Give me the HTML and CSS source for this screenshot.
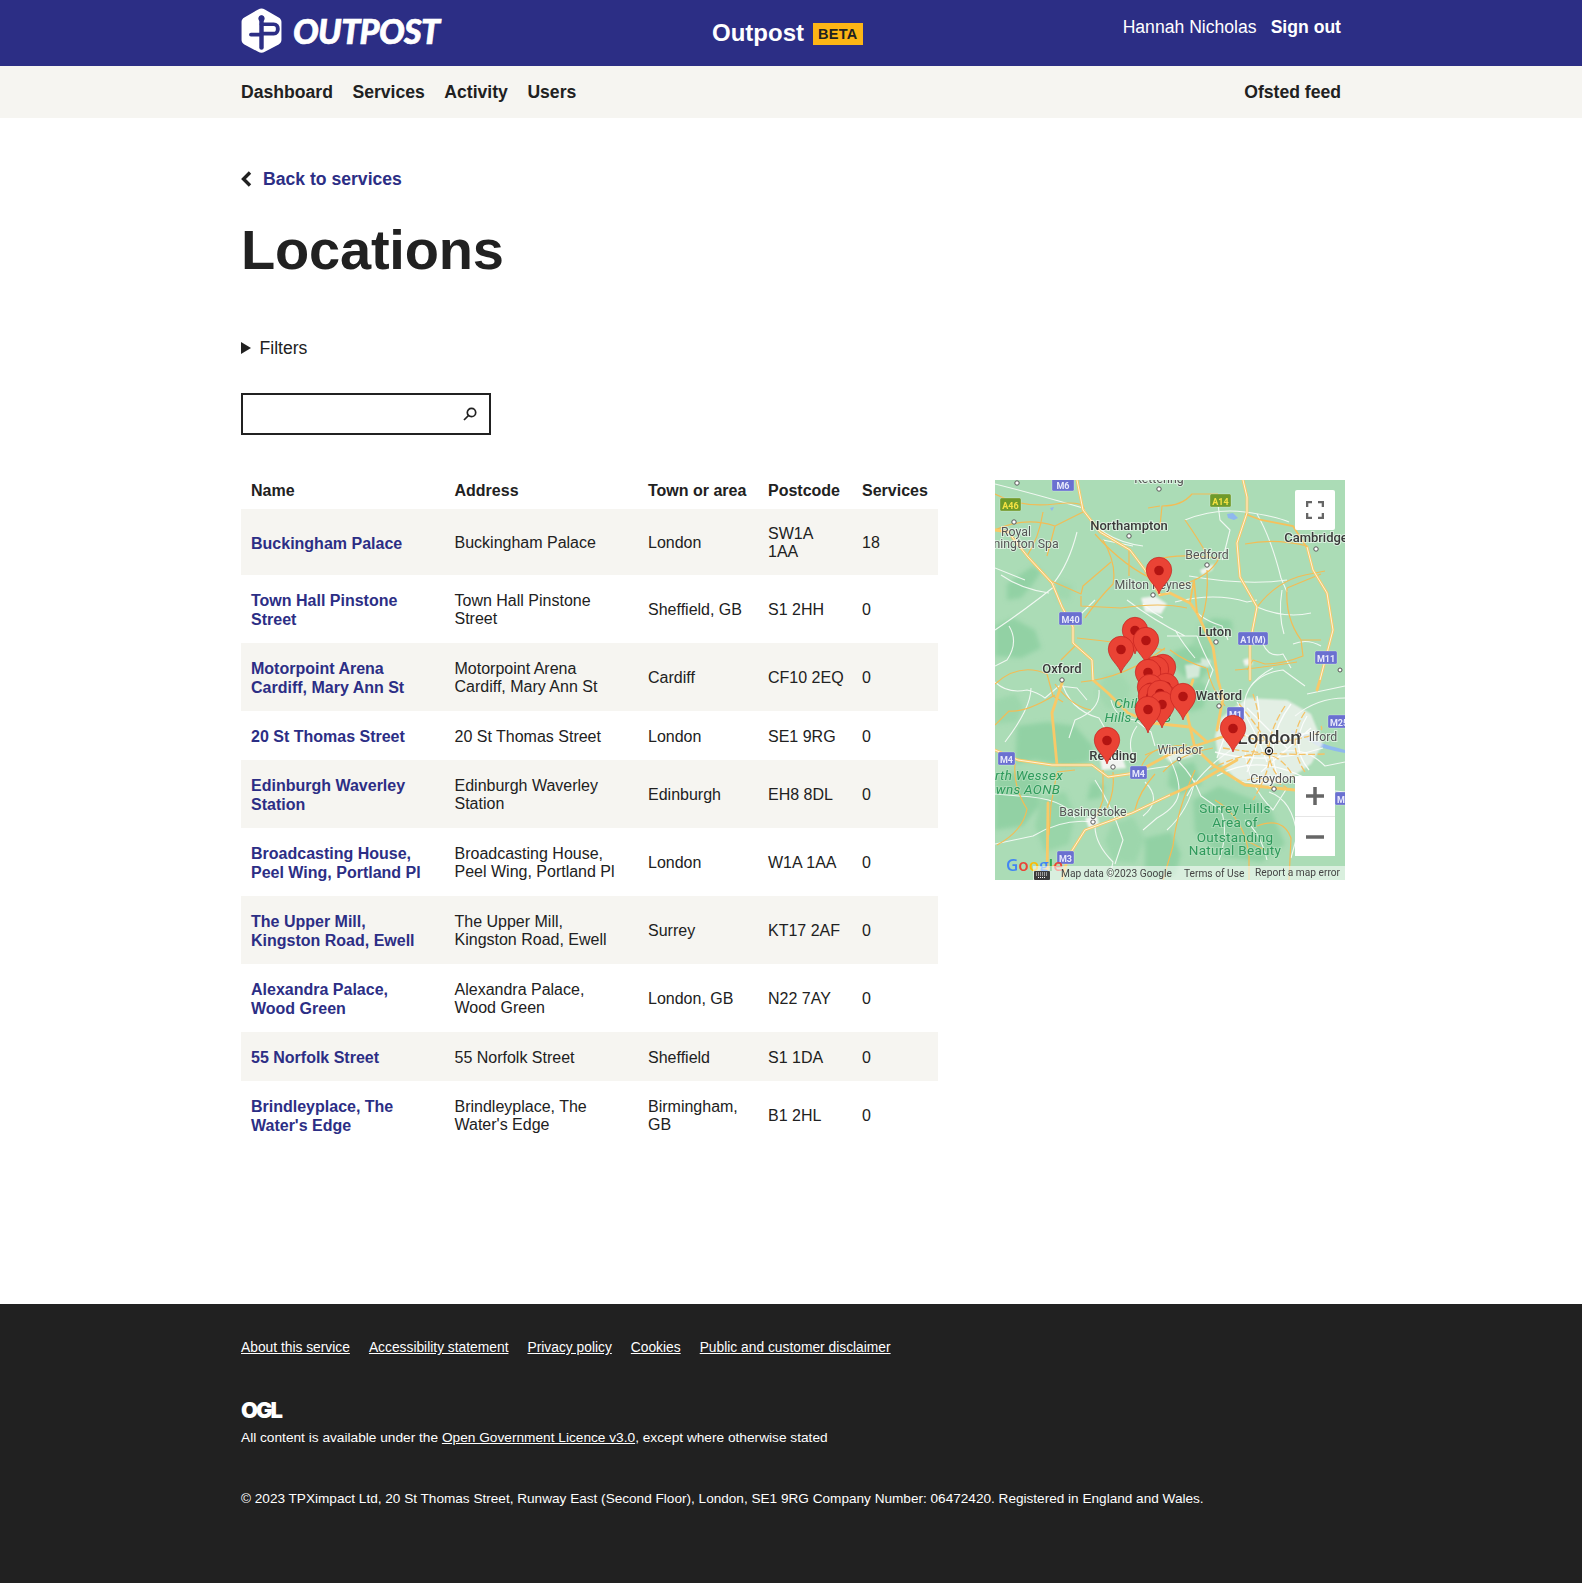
FILE: index.html
```html
<!DOCTYPE html>
<html lang="en">
<head>
	<meta charset="UTF-8" />
	<title>Locations | Outpost</title>
	<link rel="stylesheet" href="styles.css">
</head>
<body>
	<header class="masthead">
		<div class="container masthead-row">
			<a class="logo" href="#">
				<svg class="logo-mark" viewBox="0 0 37 43" width="41" height="45" preserveAspectRatio="none">
					<path d="M18.5 0.5c1 0 2 .3 3 .9l12.5 7.6c1.6 1 2.5 2.4 2.5 4.2v17.4c0 1.8-.9 3.2-2.5 4.2l-12.5 7.1c-2 1.1-4 1.1-6 0L3 34.800c-1.600-1-2.500-2.400-2.500-4.200V13.200c0-1.800.9-3.200 2.500-4.200l12.500-7.600c1-.6 2-.9 3-.9z" fill="#fff"/>
					<path d="M18.500 9v29" stroke="#2c2e85" stroke-width="4" stroke-linecap="round" fill="none"/>
					<circle cx="18.500" cy="10" r="2.800" fill="#2c2e85"/>
					<path d="M9 25.500h9.500M18.500 15.500h11c5 0 5 9 0 9h-11" stroke="#2c2e85" stroke-width="3.500" stroke-linecap="round" stroke-linejoin="round" fill="none"/>
				</svg>
				<span class="logo-word">OUTPOST</span>
			</a>
			<div class="service-name">Outpost<span class="beta">BETA</span></div>
			<div class="user-links">
				<a href="#">Hannah Nicholas</a>
				<a class="strong" href="#">Sign out</a>
			</div>
		</div>
	</header>

	<nav class="subnav">
		<div class="container subnav-row">
			<ul>
				<li><a href="#">Dashboard</a></li>
				<li><a href="#">Services</a></li>
				<li><a href="#">Activity</a></li>
				<li><a href="#">Users</a></li>
			</ul>
			<a href="#">Ofsted feed</a>
		</div>
	</nav>

	<main class="container page">
		<a class="back-link" href="#">
			<svg viewBox="0 0 11 16" width="11" height="16"><path d="M9 1.500L2.500 8 9 14.500" fill="none" stroke="#212121" stroke-width="3.400"/></svg>
			Back to services
		</a>
		<h1>Locations</h1>

		<div class="filters"><span class="arrow"></span>Filters</div>

		<div class="search">
			<input type="text" aria-label="Search">
			<svg viewBox="0 0 14 14" width="14" height="14"><circle cx="8.500" cy="5.500" r="4.200" fill="none" stroke="#212121" stroke-width="1.700"/><path d="M5.500 8.500L1 13" stroke="#212121" stroke-width="1.700"/></svg>
		</div>

		<div class="locations">
			<table>
				<thead>
					<tr>
						<th class="col-name">Name</th>
						<th class="col-address">Address</th>
						<th class="col-town">Town or area</th>
						<th class="col-postcode">Postcode</th>
						<th>Services</th>
					</tr>
				</thead>
				<tbody>
					<tr><td class="name"><a href="#">Buckingham Palace</a></td><td>Buckingham Palace</td><td>London</td><td class="postcode">SW1A 1AA</td><td>18</td></tr>
					<tr><td class="name"><a href="#">Town Hall Pinstone Street</a></td><td>Town Hall Pinstone Street</td><td>Sheffield, GB</td><td class="postcode">S1 2HH</td><td>0</td></tr>
					<tr><td class="name"><a href="#">Motorpoint Arena Cardiff, Mary Ann St</a></td><td>Motorpoint Arena Cardiff, Mary Ann St</td><td>Cardiff</td><td class="postcode">CF10 2EQ</td><td>0</td></tr>
					<tr><td class="name"><a href="#">20 St Thomas Street</a></td><td>20 St Thomas Street</td><td>London</td><td class="postcode">SE1 9RG</td><td>0</td></tr>
					<tr><td class="name"><a href="#">Edinburgh Waverley Station</a></td><td>Edinburgh Waverley Station</td><td>Edinburgh</td><td class="postcode">EH8 8DL</td><td>0</td></tr>
					<tr><td class="name"><a href="#">Broadcasting House, Peel Wing, Portland Pl</a></td><td>Broadcasting House, Peel Wing, Portland Pl</td><td>London</td><td class="postcode">W1A 1AA</td><td>0</td></tr>
					<tr><td class="name"><a href="#">The Upper Mill, Kingston Road, Ewell</a></td><td>The Upper Mill, Kingston Road, Ewell</td><td>Surrey</td><td class="postcode">KT17 2AF</td><td>0</td></tr>
					<tr><td class="name"><a href="#">Alexandra Palace, Wood Green</a></td><td>Alexandra Palace, Wood Green</td><td>London, GB</td><td class="postcode">N22 7AY</td><td>0</td></tr>
					<tr><td class="name"><a href="#">55 Norfolk Street</a></td><td>55 Norfolk Street</td><td>Sheffield</td><td class="postcode">S1 1DA</td><td>0</td></tr>
					<tr><td class="name"><a href="#">Brindleyplace, The Water's Edge</a></td><td>Brindleyplace, The Water's Edge</td><td>Birmingham, GB</td><td class="postcode">B1 2HL</td><td>0</td></tr>
				</tbody>
			</table>

			<div class="map">
				<svg class="map-canvas" viewBox="0 0 350 400" width="350" height="400">
					<defs>
						<g id="pin">
							<path d="M0 23C-2 15-12.700 9-12.700-1A12.700 12.700 0 1 1 12.700-1C12.700 9 2 15 0 23Z" fill="#ea4335" stroke="#c5221f" stroke-width=".7"/>
							<circle r="4.800" cy="-.5" fill="#b31412"/>
						</g>
						<filter id="soft" x="-5%" y="-5%" width="110%" height="110%"><feGaussianBlur stdDeviation="2"/></filter>
						<filter id="softer" x="-5%" y="-5%" width="110%" height="110%"><feGaussianBlur stdDeviation="1"/></filter>
					</defs>
					<rect width="350" height="400" fill="#abdcb6"/>

					<!-- forest and downs -->
					<g fill="#92d1a4" filter="url(#soft)">
						<path d="M12 104l14-10 12-8 8 6-8 12-12 14-14 2z"/>
						<path d="M0 146l18-8 22 12 6 18-20 10-26-2z"/>
						<path d="M204 146l14-8 18 2 2 10-20 6-12-2z"/>
						<path d="M178 172l16-6 18 4 4 18-10 12-18-4-12-12z"/>
						<path d="M190 206l14-6 10 8-6 20-14 4-8-14z"/>
						<path d="M205 150l16 8-4 24-14 2-10-14z" opacity=".6"/>
						<path d="M22 246l30-4 28 4 18 20-4 16-24 4-30-6-20 4z"/>
						<path d="M0 296l24-4 22 8-2 26-16 20-28 4z"/>
						<path d="M46 318l24-6 10 22-6 30-24 8-10-26z" opacity=".7"/>
						<path d="M96 302l14 4-4 12-14 2z"/>
						<path d="M150 358l26-6 10 22-6 22-30 2z"/>
						<path d="M116 345l22-8 12 22-10 24-22-2-8-20z" opacity=".55"/>
						<path d="M198 320l26-14 50 20 16 38-24 18-40-6-26-24z"/>
						<path d="M175 288l24-6 8 22-20 10-14-8z"/>
						<path d="M0 220l20-6 8 12-6 16-22 2z" opacity=".55"/>
						<path d="M60 100l18 6-4 14-12-2z" opacity=".4"/>
						<path d="M110 195l16-2 10 14-4 20-20 2-10-16z" opacity=".35"/>
					</g>
					<!-- water -->
					<g fill="#8fb8ee">
						<path d="M232 34l6-1 5 5-4 2-6-2z"/>
						<path d="M55 28l4-1-2 4z"/>
						<path d="M296 250c10 2 18 6 24 10 6 4 16 6 30 10l0 3c-14-3-26-5-32-10-6-4-14-8-22-10z"/>
					</g>
					<!-- built up -->
					<g fill="#f1f4f0" filter="url(#softer)">
						<path d="M226 238l26-20 40 2 24 14 12 30-12 20-20 14-24 8-30-6-18-18-4-26z" opacity=".8"/>
						<path d="M146 118l14-2 12 8-6 10-16-2z"/>
						<path d="M105 279l22-3 4 12-24 2z"/>
						<path d="M205 90l14-6-2 6-10 5z"/>
						<path d="M165 272l24-4 10 8-24 6z" opacity=".8"/>
						<path d="M148 166l8-2-2 10zM248 180l6-2 4 6-8 2z"/>
						<path d="M90 338l12-2 2 8-10 4z"/>
						<path d="M190 185l16-2-2 14-12 2zM206 178l10 2-2 8-8-2z" opacity=".7"/>
					</g>

					<!-- minor roads -->
					<g fill="none" stroke="#f8fbf8" stroke-width="1.100" stroke-linejoin="round" opacity=".9">
						<path d="M0 4Q40 14 88 28M88 28q16 32 60 38M6 95q20 14 48 18M60 106Q30 130 0 150"/>
						<path d="M82 52Q74 84 58 104M100 120l-24 24M0 88l30 12M14 146q10 16-2 34l-12 6"/>
						<path d="M148 124l10 8 10 6M108 60l30 6"/>
						<path d="M190 40q30-12 60-8t44 10M223 24l2 16 10 10-6 24-2 6M262 34q14 24 24 64l6 14M292 100q-40 6-98-4"/>
						<path d="M180 122q40-10 72 0l10-2M195 122q6 16 32 24l6 14M262 127q28 12 54 6M287 110q-4 24 2 44M268 164q6 14 20 10l8 14"/>
						<path d="M172 156h30q6 16 16 34l-8 20M180 150q8 14 20 28M132 120q26 20 58 36"/>
						<path d="M256 206q12-14 32-16l22 16M298 164q14-6 28 2"/>
						<path d="M0 202q12 12 32 8 10 2 18 8l14-12 18 2 10 12M36 208q0 20-26 54M66 200q8 30 38 38l8 14M104 210q2 20-24 30l-6 18"/>
						<path d="M116 220q4 18 24 20l16 12 4 14M142 246q-12 16-2 36M170 270q14 24 14 40t-22 28l-14 12M100 300q16 24 28 60l-8 24"/>
						<path d="M80 338q-10-20-56-22l-24-2M100 346q0 18 18 36l-4 18M98 342q-30-4-60 14l-38 8M174 286l-26 4M150 302q18 18-2 34"/>
						<path d="M184 282q14 14 22 34l20 14q8 22-2 50M200 300q-6 30-28 50M250 340q16 14 22 40M274 312q24 8 28 44l-6 22M290 296q28 14 60 16"/>
						<path d="M236 270q-32 22-44 46M250 270q2 34 28 60l14-22M286 272q24-6 44 14l20-4M300 236q22-18 50-18M312 214l38-8M250 236q-6-30 28-48"/>
					</g>
					<!-- A roads -->
					<g fill="none" stroke="#f3bc55" stroke-width="1.200" stroke-linejoin="round">
						<path d="M0 14Q26 28 60 24T88 32M0 50Q30 36 60 46L88 32M48 32q-4 26-16 44M60 46l-8 30M108 60q14 24 10 44-14 14-28 34"/>
						<path d="M116 82l-28 24-2 8-18-8-14-6M86 116v10l40 2q40-6 66 0M134 70v26M100 54q30 34 64 48"/>
						<path d="M82 158q40 4 88 12M80 166l-14 14M170 168q-40 30-84 34M60 204q16 22 36 26M150 92q4-18 50-16l24 2"/>
						<path d="M224 78q-8 18-40 28M212 90q2 30-6 52M223 14h-26q-10 12-30 12l-2 20M165 26l-12 2M190 40q14 20 24 38M250 64q30-6 62 2"/>
						<path d="M262 127q20-26 48-32l20-4M292 108q-2 30 14 52l2 16q-20 8-38 8l-12-4-6 10M306 160h20M292 108l34-14"/>
						<path d="M240 190q24-2 62-8M175 170q16 12 36 18M212 188q4 20 18 38"/>
						<path d="M0 204q24-22 52-10l6 22 10 6M60 215q-30 18-46 16L0 245M62 292l-6 33-2 30M68 200l-10 30M108 290v30l-6 16M62 292l18-2"/>
						<path d="M20 283q-2 24 12 46-4 22-30 36M118 292q2 20-6 36M74 378q-14 8-32 14M140 330q4-18 20-36M150 275q20-10 42-10"/>
						<path d="M170 268q-20 2-26 26M200 290q-18 40-22 76l-10 34M220 320q30 18 34 56v24M262 346q26-10 34 12l-2 42M322 320q-20 8-20 40M218 268q-34 6-50 24"/>
						<path d="M250 360l20 10"/>
					</g>
					<!-- London network -->
					<g fill="none" stroke="#fff" stroke-width="1.300" opacity=".85">
						<path d="M228 246l40 16 50-10M242 222q18 26 30 60M296 224q-30 40-10 80M220 272q50 14 108-4M222 296q40-24 92 4M262 216q8 40-10 76M312 236q-18 30 2 54M240 300q20 6 50 0M236 238l-14 40M252 228l40 40M316 248l-50 44"/>
					</g>
					<g fill="none" stroke="#f5c266" stroke-width="1.300" stroke-dasharray="7 2.500">
						<path d="M236 248q24 18 60 12t30-14M244 224q26 30 30 46t-16 50M290 226q-30 46-4 74M228 268q50 8 102 6M214 290q30-16 52-16t34 26M258 214q14 40-6 70M310 232q-20 30 0 60M252 300q20-6 40 8"/>
					</g>
					<!-- motorways -->
					<g fill="none" stroke="#f8c968" stroke-width="2.800" stroke-linecap="round" stroke-linejoin="round">
						<path d="M82 0L88 30 105 52 135 70 150 90 165 115 175 113 195 123 202 133 218 167 223 200 228 218 222 250"/>
						<path d="M17 57L33 77 57 103 67 127 78 147 78 163 97 180 98 200 113 213 133 233 157 243 195 247 212 262"/>
						<path d="M248 0L252 17 252 33 242 63 245 97 262 127 255 163 255 200"/>
						<path d="M312 67L318 90 332 113 338 150 325 200 322 210"/>
						<path d="M0 270L23 280 57 285 97 285 113 297 140 293 173 275 200 266 230 256"/>
						<path d="M242 280L202 303 175 315 137 333 90 350 73 377 67 400"/>
						<path d="M68 200L57 233 62 285"/>
						<path d="M53 323L52 400"/>
						<path d="M198 200L190 225 200 268 218 285 250 305 300 310"/>
						<path d="M0 50L14 52"/>
					</g>
					<path d="M195 122l4-22 3 33M250 34l16 6 32 6 14 22" fill="none" stroke="#f6c15b" stroke-width="1.800"/>
					<g fill="none" stroke="#fffef8" stroke-width=".8" stroke-linejoin="round">
						<path d="M82 0L88 30 105 52 135 70 150 90 165 115M17 57L33 77 57 103 67 127 78 147 78 163 97 180 98 200M0 270L23 280 57 285 97 285 113 297 140 293"/>
						<path d="M248 0L252 17 252 33 242 63 245 97 262 127 255 163 255 200M312 67L318 90 332 113 338 150 325 200M175 315L137 333 90 350 73 377"/>
					</g>

					<!-- town dots -->
					<g fill="#fff" stroke="#555" stroke-width="1">
						<circle cx="22" cy="3" r="2.200"/><circle cx="164" cy="9" r="2.200"/><circle cx="19" cy="42" r="2.200"/>
						<circle cx="134" cy="56" r="2.200"/><circle cx="321" cy="69" r="2.200"/><circle cx="212" cy="85" r="2.200"/>
						<circle cx="158" cy="115" r="2.200"/><circle cx="221" cy="162" r="2.200"/><circle cx="67" cy="200" r="2.200"/>
						<circle cx="224" cy="226" r="2.200"/><circle cx="184" cy="279" r="1.800"/><circle cx="118" cy="287" r="2.200"/>
						<circle cx="279" cy="309" r="2.200"/><circle cx="98" cy="342" r="2.200"/><circle cx="304" cy="255" r="1.800"/>
						<circle cx="345" cy="190" r="2"/>
					</g>
					<circle cx="274" cy="271" r="3.600" fill="#fff" stroke="#222" stroke-width="1.200"/>
					<circle cx="274" cy="271" r="1.800" fill="#222"/>

					<!-- road shields -->
					<g class="shields">
						<g class="m"><rect x="57" y="-2" width="22" height="13" rx="1.500"/><text x="68" y="8.500">M6</text></g>
						<g class="a"><rect x="5" y="18" width="21" height="13" rx="1.500"/><text x="15.500" y="28.500">A46</text></g>
						<g class="a"><rect x="215" y="14" width="21" height="13" rx="1.500"/><text x="225.500" y="24.500">A14</text></g>
						<g class="m"><rect x="64" y="132" width="23" height="13" rx="1.500"/><text x="75.500" y="142.500">M40</text></g>
						<g class="m"><rect x="243" y="152" width="30" height="13" rx="1.500"/><text x="258" y="162.500">A1(M)</text></g>
						<g class="m"><rect x="320" y="171" width="22" height="13" rx="1.500"/><text x="331" y="181.500">M11</text></g>
						<g class="m"><rect x="232" y="227" width="17" height="13" rx="1.500"/><text x="240.500" y="237.500">M1</text></g>
						<g class="m"><rect x="333" y="235" width="22" height="13" rx="1.500"/><text x="344" y="245.500">M25</text></g>
						<g class="m"><rect x="3" y="272" width="17" height="13" rx="1.500"/><text x="11.500" y="282.500">M4</text></g>
						<g class="m"><rect x="135" y="286" width="17" height="13" rx="1.500"/><text x="143.500" y="296.500">M4</text></g>
						<g class="m"><rect x="62" y="371" width="17" height="13" rx="1.500"/><text x="70.500" y="381.500">M3</text></g>
						<g class="m"><rect x="340" y="312" width="22" height="13" rx="1.500"/><text x="351" y="322.500">M25</text></g>
					</g>

					<!-- place names -->
					<g class="place">
						<text x="164" y="3">Kettering</text>
						<text x="21" y="56">Royal</text>
						<text x="31" y="68">nington Spa</text>
						<text x="212" y="79">Bedford</text>
						<text x="158" y="109">Milton Keynes</text>
						<text x="185" y="274">Windsor</text>
						<text x="328" y="261">Ilford</text>
						<text x="278" y="303">Croydon</text>
						<text x="98" y="336">Basingstoke</text>
					</g>
					<g class="place dark">
						<text x="134" y="50">Northampton</text>
						<text x="321" y="62">Cambridge</text>
						<text x="220" y="156">Luton</text>
						<text x="67" y="193">Oxford</text>
						<text x="224" y="220">Watford</text>
						<text x="118" y="280">Reading</text>
						<text class="big" x="274" y="264">London</text>
					</g>
					<g class="place green italic">
						<text x="143" y="228">Chiltern</text>
						<text x="143" y="242">Hills AONB</text>
						<text x="34" y="300">rth Wessex</text>
						<text x="33" y="314">wns AONB</text>
					</g>
					<g class="place green">
						<text x="240" y="333">Surrey Hills</text>
						<text x="240" y="347">Area of</text>
						<text x="240" y="362">Outstanding</text>
						<text x="240" y="375">Natural Beauty</text>
					</g>

					<!-- markers -->
					<use href="#pin" x="164" y="91"/>
					<use href="#pin" x="140" y="151"/>
					<use href="#pin" x="151" y="161"/>
					<use href="#pin" x="126" y="170"/>
					<use href="#pin" x="168" y="188"/>
					<use href="#pin" x="161" y="190"/>
					<use href="#pin" x="153" y="193"/>
					<use href="#pin" x="171" y="207"/>
					<use href="#pin" x="155" y="208"/>
					<use href="#pin" x="156" y="217"/>
					<use href="#pin" x="168" y="217"/>
					<use href="#pin" x="165" y="214"/>
					<use href="#pin" x="167" y="225"/>
					<use href="#pin" x="188" y="217"/>
					<use href="#pin" x="153" y="230"/>
					<use href="#pin" x="238" y="249"/>
					<use href="#pin" x="112" y="261"/>

					<!-- google attribution -->
					<text class="google" x="11" y="391"><tspan fill="#4285f4">G</tspan><tspan fill="#ea4335">o</tspan><tspan fill="#fbbc05">o</tspan><tspan fill="#4285f4">g</tspan><tspan fill="#34a853">l</tspan><tspan fill="#ea4335">e</tspan></text>
					<rect x="38" y="386" width="312" height="14" fill="#fff" opacity=".55"/>
					<rect x="39" y="391" width="16" height="9" rx="1" fill="#3c3c3c"/>
					<path d="M41 393h12M41 395h12M43 397.500h8" stroke="#fff" stroke-width="1" stroke-dasharray="1 1"/>
					<g class="attribution">
						<text x="66" y="397">Map data ©2023 Google</text>
						<text x="189" y="397">Terms of Use</text>
						<text x="260" y="396">Report a map error</text>
					</g>
				</svg>
				<button class="map-btn fullscreen" aria-label="Toggle fullscreen">
					<svg viewBox="0 0 18 18" width="18" height="18"><path d="M1 6V1h5M12 1h5v5M17 12v5h-5M6 17H1v-5" fill="none" stroke="#666" stroke-width="2.600"/></svg>
				</button>
				<div class="map-zoom">
					<button class="map-btn" aria-label="Zoom in">
						<svg viewBox="0 0 18 18" width="18" height="18"><path d="M0 9h18M9 0v18" stroke="#666" stroke-width="3.500"/></svg>
					</button>
					<button class="map-btn" aria-label="Zoom out">
						<svg viewBox="0 0 18 18" width="18" height="18"><path d="M0 9h18" stroke="#666" stroke-width="3.500"/></svg>
					</button>
				</div>
			</div>
		</div>
	</main>

	<footer class="site-footer">
		<div class="container">
			<ul class="footer-links">
				<li><a href="#">About this service</a></li>
				<li><a href="#">Accessibility statement</a></li>
				<li><a href="#">Privacy policy</a></li>
				<li><a href="#">Cookies</a></li>
				<li><a href="#">Public and customer disclaimer</a></li>
			</ul>
			<div class="ogl">OGL</div>
			<p class="licence">All content is available under the <a href="#">Open Government Licence v3.0</a>, except where otherwise stated</p>
			<p class="company">© 2023 TPXimpact Ltd, 20 St Thomas Street, Runway East (Second Floor), London, SE1 9RG Company Number: 06472420. Registered in England and Wales.</p>
		</div>
	</footer>
</body>
</html>
```

FILE: styles.css
```css
* {
	box-sizing: border-box;
}

body {
	margin: 0;
	background: #fff;
	color: #212121;
	font-family: "Liberation Sans", Arial, sans-serif;
	font-size: 16px;
}

a {
	color: inherit;
	text-decoration: none;
}

ul {
	list-style: none;
	margin: 0;
	padding: 0;
}

.container {
	width: 1100px;
	margin: 0 auto;
}

/* header */
.masthead {
	height: 66px;
	background: #2c2e85;
	color: #fff;
}

.masthead-row {
	display: flex;
	justify-content: space-between;
	height: 66px;
}

.logo {
	display: flex;
	align-items: center;
	gap: 11px;
	width: 200px;
	height: 60px;
}

.logo-mark {
	flex: none;
}

.logo-word {
	font-family: Lato, sans-serif;
	font-weight: 900;
	font-style: italic;
	font-size: 34px;
	letter-spacing: -.6px;
	-webkit-text-stroke: .7px #fff;
}

.service-name {
	margin-left: 11px;
	padding-top: 19px;
	font-size: 24px;
	font-weight: bold;
	white-space: nowrap;
}

.beta {
	display: inline-block;
	vertical-align: 2px;
	margin-left: 9px;
	padding: 0 5px;
	background: #fdb515;
	color: #212121;
	font-size: 14.500px;
	line-height: 22px;
	letter-spacing: .3px;
}

.user-links {
	display: flex;
	gap: 14px;
	padding-top: 17px;
	font-size: 17.600px;
	white-space: nowrap;
}

.strong {
	font-weight: bold;
}

/* secondary nav */
.subnav {
	height: 52px;
	background: #f6f5f1;
	font-size: 17.600px;
	font-weight: bold;
}

.subnav-row,
.subnav ul {
	display: flex;
	align-items: center;
	height: 52px;
}

.subnav-row {
	justify-content: space-between;
}

.subnav ul {
	gap: 19.500px;
}

/* page */
.page {
	height: 1186px;
	padding-top: 51px;
}

.back-link {
	display: flex;
	align-items: center;
	gap: 11px;
	color: #2c2e85;
	font-size: 17.600px;
	font-weight: bold;
	line-height: 20px;
}

h1 {
	margin: 29px 0 0;
	font-size: 56px;
	line-height: 64px;
	letter-spacing: -.2px;
}

.filters {
	display: flex;
	align-items: center;
	margin-top: 56px;
	font-size: 17.600px;
	line-height: 20px;
}

.arrow {
	width: 0;
	height: 0;
	margin-right: 8.500px;
	border-left: 10.500px solid #212121;
	border-top: 6px solid transparent;
	border-bottom: 6px solid transparent;
}

.search {
	display: flex;
	align-items: center;
	width: 250px;
	height: 42px;
	margin-top: 35px;
	padding-right: 12px;
	border: 2px solid #212121;
}

.search input {
	flex: 1;
	min-width: 0;
	height: 100%;
	border: none;
	outline: none;
	background: none;
}

.locations {
	display: grid;
	grid-template-columns: 697px 350px;
	gap: 57px;
	align-items: start;
	margin-top: 45px;
}

table {
	width: 697px;
	border-collapse: collapse;
	table-layout: fixed;
	line-height: 18px;
}

th {
	padding: 2px 10px 9px;
	text-align: left;
	font-weight: bold;
}

td {
	padding: 16px 10px 14px;
}

.col-name { width: 203.500px; }
.col-address { width: 193.500px; }
.col-town { width: 120px; }
.col-postcode { width: 94px; }

.postcode {
	padding-right: 8px;
}

tbody tr:nth-child(odd) {
	background: #f6f5f1;
}

.name {
	line-height: 19px;
	font-weight: bold;
}

.name a {
	color: #2c2e85;
}

/* map */
.map {
	position: relative;
	width: 350px;
	height: 400px;
	overflow: hidden;
}

.map-canvas {
	display: block;
	filter: blur(.45px);
}

.map-canvas text {
	font-family: Roboto, sans-serif;
}

.place text {
	font-size: 12.300px;
	text-anchor: middle;
	fill: #555;
	stroke: #fff;
	stroke-opacity: .55;
	stroke-width: 2px;
	paint-order: stroke;
}

.place.dark text {
	font-size: 13px;
	font-weight: 500;
	fill: #3a3a3a;
}

.place.dark .big {
	font-size: 19px;
}

.place.green text {
	font-size: 13.500px;
	fill: #2f9a5c;
	stroke: #bfe6c8;
	stroke-opacity: .5;
	letter-spacing: .3px;
}

.place.italic text {
	font-style: italic;
}

.shields rect {
	stroke: #fff;
	stroke-opacity: .5;
	stroke-width: .5;
}

.shields text {
	font-size: 9px;
	font-weight: 700;
	text-anchor: middle;
}

.shields .m rect { fill: #6a70d0; }
.shields .m text { fill: #e8e9fb; }
.shields .a rect { fill: #6f9a2a; }
.shields .a text { fill: #f6e243; }

.map-canvas .google {
	font-family: "Open Sans", sans-serif;
	font-size: 17px;
	font-weight: 600;
}

.attribution text {
	font-size: 10.200px;
	fill: #444;
}

.map-btn {
	display: flex;
	align-items: center;
	justify-content: center;
	width: 40px;
	height: 40px;
	padding: 0;
	border: none;
	background: #fff;
}

.fullscreen {
	position: absolute;
	top: 10px;
	right: 10px;
	border-radius: 2px;
}

.map-zoom {
	position: absolute;
	top: 296px;
	right: 10px;
	width: 40px;
	border-radius: 2px;
	background: #fff;
}

.map-zoom .map-btn + .map-btn {
	position: relative;
	border-top: 1px solid #e6e6e6;
}

/* footer */
.site-footer {
	height: 279px;
	padding-top: 35px;
	background: #212121;
	color: #fff;
	font-size: 13.800px;
}

.site-footer a {
	text-decoration: underline;
}

.footer-links {
	display: flex;
	gap: 19px;
	line-height: 18px;
}

.ogl {
	margin-top: 41px;
	font-family: Inter, sans-serif;
	font-size: 22px;
	font-weight: 900;
	letter-spacing: -2.100px;
	line-height: 24px;
}

.licence {
	margin: 7px 0 0;
	font-size: 13.700px;
	line-height: 18px;
}

.company {
	margin: 43px 0 0;
	font-size: 13.600px;
	line-height: 18px;
}
```
